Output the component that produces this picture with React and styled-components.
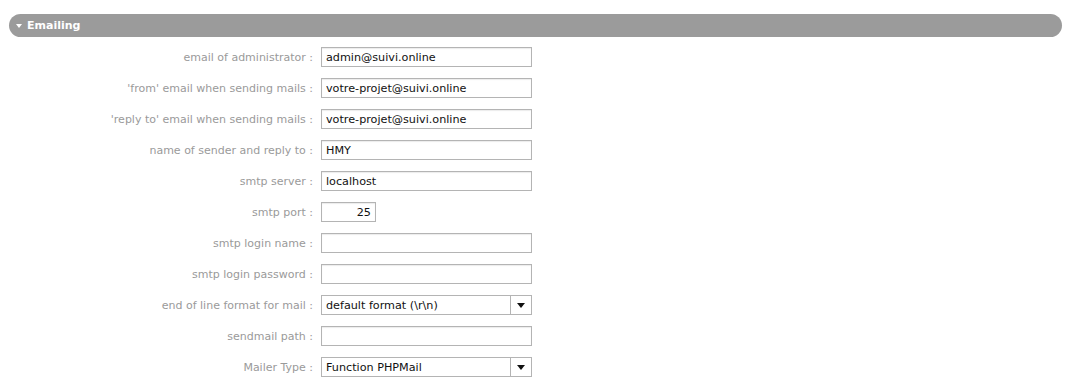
import React from "react";
import styled, { createGlobalStyle } from "styled-components";

const GlobalStyle = createGlobalStyle`
  body {
    margin: 0;
    background: #ffffff;
    font-family: "DejaVu Sans", Verdana, sans-serif;
  }
`;

const Page = styled.div`
  padding: 14px 18px 0 9px;
`;

const SectionHeader = styled.div`
  height: 23px;
  border-radius: 12px;
  background: #9b9b9b;
  display: flex;
  align-items: center;
  gap: 5px;
  padding-left: 7px;
  color: #ffffff;
  font-size: 11px;
  font-weight: bold;
`;

const Caret = styled.span`
  width: 0;
  height: 0;
  border-left: 3.5px solid transparent;
  border-right: 3.5px solid transparent;
  border-top: 4px solid #ffffff;
  margin-top: 1px;
`;

const Form = styled.div`
  display: grid;
  grid-template-columns: 304px auto;
  column-gap: 8px;
  row-gap: 11px;
  align-items: center;
  justify-content: start;
  margin-top: 10px;
`;

const Label = styled.label`
  text-align: right;
  color: #9a9a9a;
  font-size: 11px;
  white-space: nowrap;
`;

const TextInput = styled.input`
  box-sizing: border-box;
  width: ${({ $w }) => $w || 211}px;
  height: 20px;
  border: 1px solid #b4b4b4;
  box-shadow: inset 0 1px 1px rgba(0, 0, 0, 0.08);
  padding: 0 4px;
  font-family: "DejaVu Sans", Verdana, sans-serif;
  font-size: 11.2px;
  color: #111;
  text-align: ${({ $right }) => ($right ? "right" : "left")};
  outline: none;
`;

const SelectBox = styled.div`
  box-sizing: border-box;
  width: 211px;
  height: 20px;
  border: 1px solid #b4b4b4;
  display: flex;
  align-items: stretch;
  font-size: 11.2px;
  color: #111;
  background: #fff;
`;

const SelectValue = styled.span`
  flex: 1;
  display: flex;
  align-items: center;
  padding-left: 4px;
`;

const SelectArrow = styled.span`
  width: 20px;
  border-left: 1px solid #b4b4b4;
  display: flex;
  align-items: center;
  justify-content: center;

  &::after {
    content: "";
    border-left: 4px solid transparent;
    border-right: 4px solid transparent;
    border-top: 5px solid #111;
  }
`;

const rows = [
  { label: "email of administrator :", value: "admin@suivi.online" },
  { label: "'from' email when sending mails :", value: "votre-projet@suivi.online" },
  { label: "'reply to' email when sending mails :", value: "votre-projet@suivi.online" },
  { label: "name of sender and reply to :", value: "HMY" },
  { label: "smtp server :", value: "localhost" },
  { label: "smtp port :", value: "25", width: 55, right: true },
  { label: "smtp login name :", value: "" },
  { label: "smtp login password :", value: "" },
  { label: "end of line format for mail :", value: "default format (\\r\\n)", select: true },
  { label: "sendmail path :", value: "" },
  { label: "Mailer Type :", value: "Function PHPMail", select: true },
];

export default function App() {
  return (
    <Page>
      <GlobalStyle />
      <SectionHeader>
        <Caret />
        Emailing
      </SectionHeader>
      <Form>
        {rows.map((row, i) => (
          <React.Fragment key={i}>
            <Label>{row.label}</Label>
            {row.select ? (
              <SelectBox>
                <SelectValue>{row.value}</SelectValue>
                <SelectArrow />
              </SelectBox>
            ) : (
              <TextInput defaultValue={row.value} $w={row.width} $right={row.right} />
            )}
          </React.Fragment>
        ))}
      </Form>
    </Page>
  );
}
